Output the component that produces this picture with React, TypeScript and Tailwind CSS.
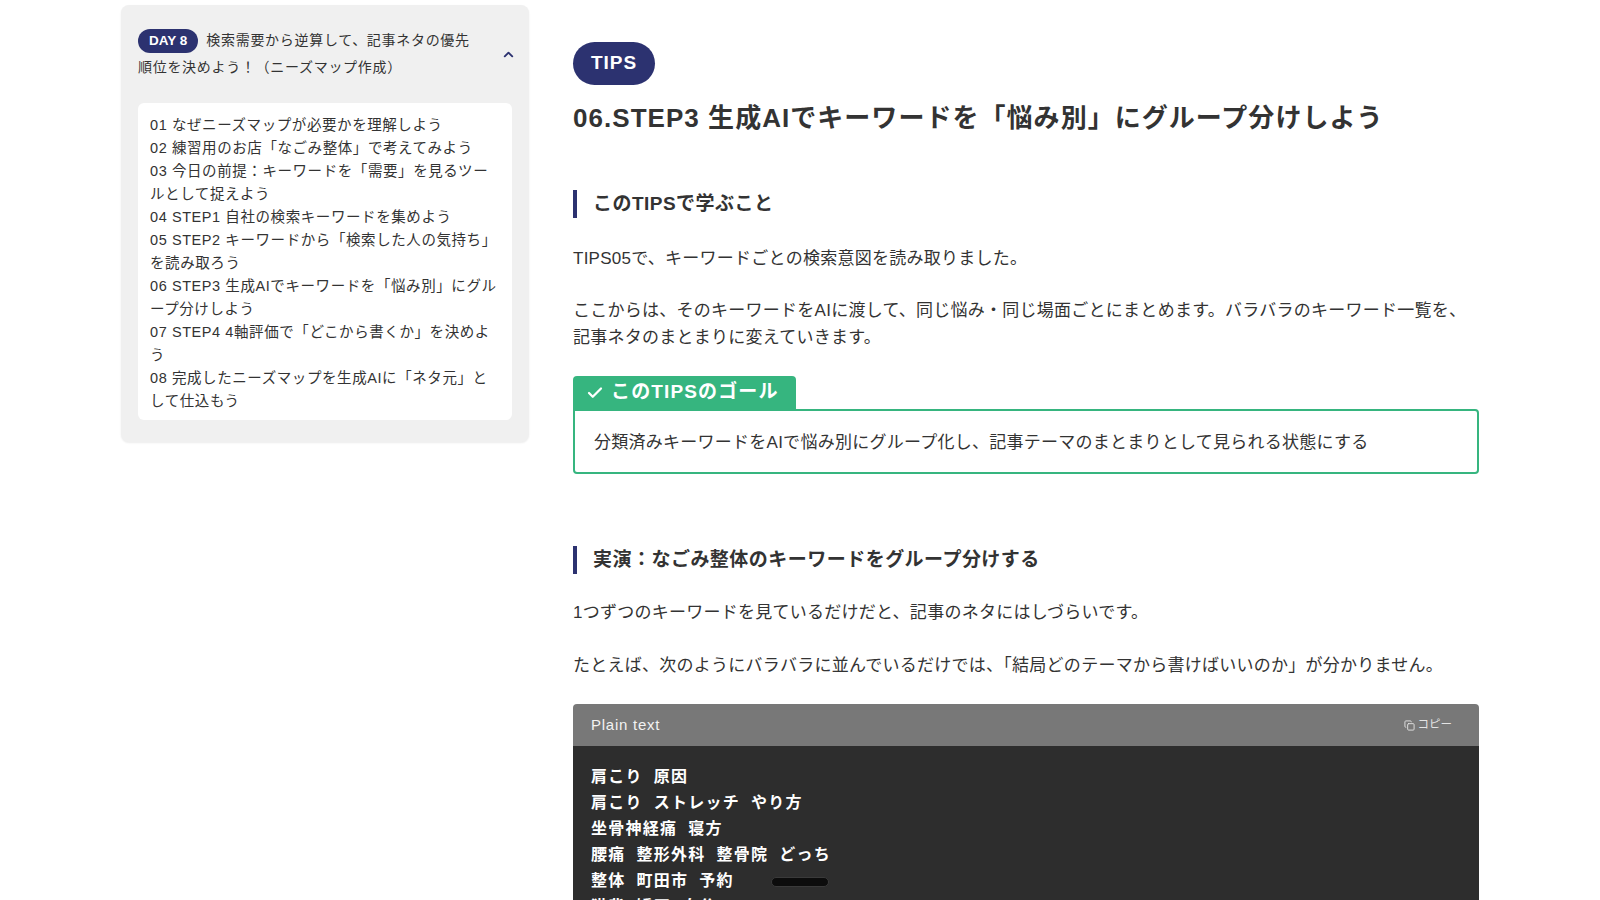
import React from "react";
import { Check, ChevronUp, Copy } from "lucide-react";

const lessons = [
  "01 なぜニーズマップが必要かを理解しよう",
  "02 練習用のお店「なごみ整体」で考えてみよう",
  "03 今日の前提：キーワードを「需要」を見るツールとして捉えよう",
  "04 STEP1 自社の検索キーワードを集めよう",
  "05 STEP2 キーワードから「検索した人の気持ち」を読み取ろう",
  "06 STEP3 生成AIでキーワードを「悩み別」にグループ分けしよう",
  "07 STEP4 4軸評価で「どこから書くか」を決めよう",
  "08 完成したニーズマップを生成AIに「ネタ元」として仕込もう",
];

const keywords = [
  "肩こり 原因",
  "肩こり ストレッチ やり方",
  "坐骨神経痛 寝方",
  "腰痛 整形外科 整骨院 どっち",
  "整体 町田市 予約",
  "猫背 矯正 自分で",
  "頭痛 首こり 関係",
];

function SectionHeading({ children, className = "" }: { children: React.ReactNode; className?: string }) {
  return (
    <h2
      className={`border-l-4 border-[#2c3270] pl-4 text-[19px] font-bold leading-[28px] tracking-[0.025em] text-[#333] ${className}`}
    >
      {children}
    </h2>
  );
}

function Sidebar() {
  return (
    <aside className="w-[408px] self-start rounded-[8px] bg-[#f0f0f0] px-[17px] pb-[22px] pt-[22px] shadow-[0_1px_2px_rgba(0,0,0,0.08)]">
      <div className="flex items-center">
        <p className="w-[344px] text-[14px] leading-[27px] tracking-[0.05em] text-[#333]">
          <span className="mr-[8px] inline-block h-[24px] rounded-full bg-[#2c3270] px-[11px] align-middle text-[13.5px] font-bold leading-[24px] tracking-normal text-white">
            DAY 8
          </span>
          検索需要から逆算して、記事ネタの優先順位を決めよう！（ニーズマップ作成）
        </p>
        <ChevronUp className="-mr-[4px] ml-auto text-[#2c3270]" size={15} strokeWidth={3} />
      </div>

      <ul className="mt-[22px] rounded-[6px] bg-white pb-[7px] pl-[12px] pr-[14px] pt-[11px] text-[14.5px] leading-[23px] tracking-[0.04em] text-[#333]">
        {lessons.map((item) => (
          <li key={item}>{item}</li>
        ))}
      </ul>
    </aside>
  );
}

function GoalBox() {
  return (
    <div className="mt-[25px]">
      <div className="flex h-[33px] w-fit items-center gap-[7px] rounded-t-[4px] bg-[#36b57f] pl-[13px] pr-[17px] text-[19px] font-bold tracking-[0.06em] text-white">
        <Check size={18} strokeWidth={3} />
        このTIPSのゴール
      </div>
      <div className="rounded-b-[4px] rounded-tr-[4px] border-2 border-[#36b57f] pb-[16px] pl-[19px] pt-[18px] text-[17px] leading-[27px] tracking-[0.015em] text-[#333]">
        分類済みキーワードをAIで悩み別にグループ化し、記事テーマのまとまりとして見られる状態にする
      </div>
    </div>
  );
}

function CodeBlock() {
  return (
    <div className="relative mt-[25px] overflow-hidden rounded-t-[4px]">
      <div className="flex h-[42px] items-center justify-between bg-[#787878] pl-[18px] pr-[27px]">
        <span className="text-[15px] tracking-[0.05em] text-[#f2f2f2]">Plain text</span>
        <button type="button" className="flex items-center gap-[3px] text-[11.5px] text-[#e4e4e4]">
          <Copy size={11} strokeWidth={2} />
          コピー
        </button>
      </div>
      <pre className="bg-[#2d2d2d] pb-[20px] pl-[18px] pt-[19px] font-['Liberation_Mono','Noto_Sans_CJK_JP',monospace] text-[16px] font-bold leading-[26px] tracking-[0.08em] text-white">
        {keywords.join("\n")}
      </pre>
      <span className="absolute left-[198px] top-[173px] h-[10px] w-[58px] rounded-full border border-[#3a3a3a] bg-[#0c0c0c]" />
    </div>
  );
}

export default function App() {
  return (
    <div className="flex min-h-screen gap-[44px] bg-white pl-[121px] pt-[5px] font-['Liberation_Sans','Noto_Sans_CJK_JP',sans-serif]">
      <Sidebar />

      <main className="w-[906px] pt-[37px]">
        <span className="inline-flex h-[43px] items-center rounded-full bg-[#2c3270] px-[18px] text-[19px] font-bold tracking-[0.05em] text-white">
          TIPS
        </span>
        <h1 className="mt-[15px] text-[26px] font-bold leading-[36px] tracking-[0.04em] text-[#333]">
          06.STEP3 生成AIでキーワードを「悩み別」にグループ分けしよう
        </h1>

        <SectionHeading className="mt-[54px]">このTIPSで学ぶこと</SectionHeading>
        <div className="text-[17px] leading-[27px] tracking-[0.015em] text-[#333]">
          <p className="mt-[27px]">TIPS05で、キーワードごとの検索意図を読み取りました。</p>
          <p className="mt-[25px]">
            ここからは、そのキーワードをAIに渡して、同じ悩み・同じ場面ごとにまとめます。バラバラのキーワード一覧を、記事ネタのまとまりに変えていきます。
          </p>
        </div>

        <GoalBox />

        <SectionHeading className="mt-[72px]">実演：なごみ整体のキーワードをグループ分けする</SectionHeading>
        <div className="text-[17px] leading-[27px] tracking-[0.015em] text-[#333]">
          <p className="mt-[25px]">1つずつのキーワードを見ているだけだと、記事のネタにはしづらいです。</p>
          <p className="mt-[26px]">
            たとえば、次のようにバラバラに並んでいるだけでは、「結局どのテーマから書けばいいのか」が分かりません。
          </p>
        </div>

        <CodeBlock />
      </main>
    </div>
  );
}
